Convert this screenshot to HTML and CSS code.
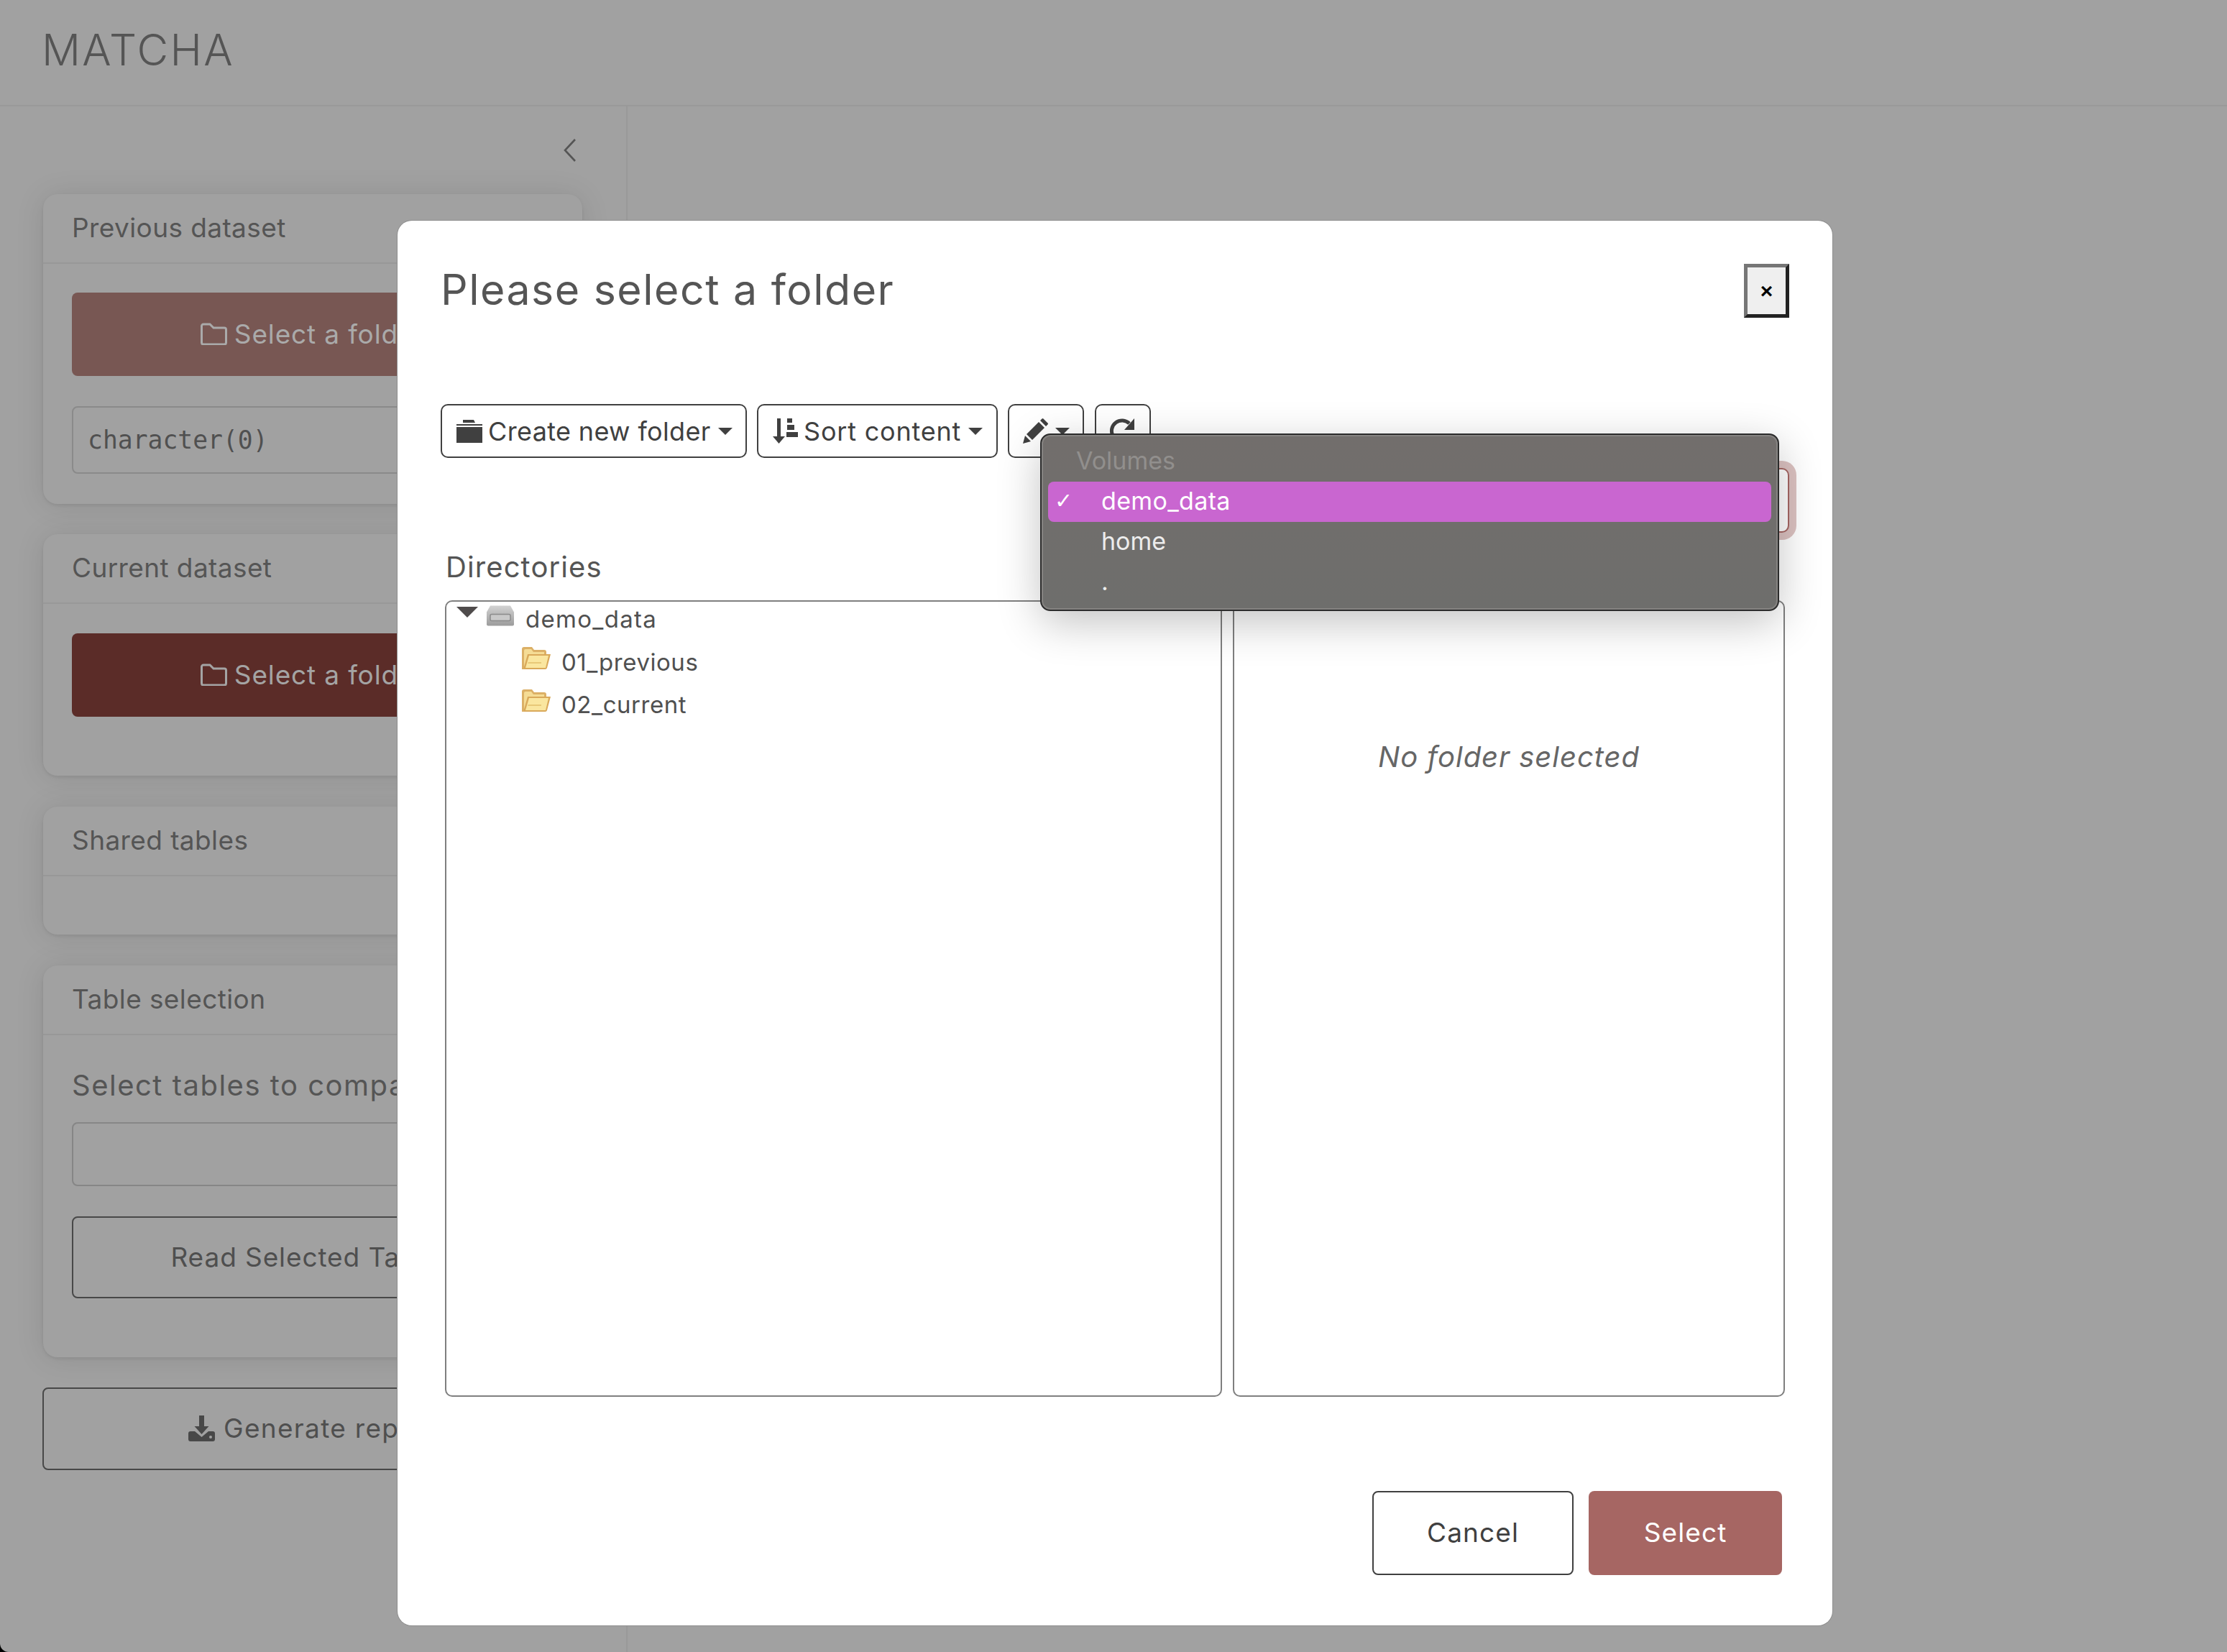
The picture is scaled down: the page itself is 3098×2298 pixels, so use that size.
FILE: index.html
```html
<!DOCTYPE html>
<html lang="en">
<head>
<meta charset="utf-8">
<title>MATCHA</title>
<link rel="stylesheet" href="styles.css">
</head>
<body>
<header class="topbar"><h1 class="brand">MATCHA</h1></header>
<div class="layout">
  <aside class="sidebar">
    <div class="collapse-row">
      <svg class="chevron" viewBox="0 0 18 32"><path d="M16 1 2 16l14 15" fill="none" stroke="#555" stroke-width="2.6"/></svg>
    </div>
    <section class="card card-tight">
      <div class="card-head">Previous dataset</div>
      <div class="card-body stack">
        <button class="btn-fill btn-prev"><svg class="ico-folder" viewBox="0 0 37 31"><path d="M4 2h9l5 5h15a2.500 2.500 0 0 1 2.500 2.500v18A2.500 2.500 0 0 1 33 30H4a2.500 2.500 0 0 1-2.500-2.500v-23A2.500 2.500 0 0 1 4 2z" fill="none" stroke="currentColor" stroke-width="3"/></svg>Select a folder</button>
        <div class="mono-box">character(0)</div>
      </div>
    </section>
    <section class="card">
      <div class="card-head">Current dataset</div>
      <div class="card-body card-body-tall">
        <button class="btn-fill btn-cur"><svg class="ico-folder" viewBox="0 0 37 31"><path d="M4 2h9l5 5h15a2.500 2.500 0 0 1 2.500 2.500v18A2.500 2.500 0 0 1 33 30H4a2.500 2.500 0 0 1-2.500-2.500v-23A2.500 2.500 0 0 1 4 2z" fill="none" stroke="currentColor" stroke-width="3"/></svg>Select a folder</button>
      </div>
    </section>
    <section class="card">
      <div class="card-head">Shared tables</div>
      <div class="card-body card-body-empty"></div>
    </section>
    <section class="card card-tight">
      <div class="card-head">Table selection</div>
      <div class="card-body card-body-tables">
        <label class="field-label">Select tables to compare:</label>
        <div class="empty-input"></div>
        <button class="btn-line btn-read">Read Selected Tables</button>
      </div>
    </section>
    <button class="btn-line btn-gen"><svg class="ico-dl" viewBox="0 0 37 36"><path d="M15 0h7v15h6.500L18.500 26 8.500 15H15z" fill="#484848"/><path d="M3 22h6l9.500 8L28 22h6a3 3 0 0 1 3 3v8a3 3 0 0 1-3 3H3a3 3 0 0 1-3-3v-8a3 3 0 0 1 3-3z" fill="#484848"/><circle cx="31" cy="30" r="2" fill="#a1a1a1"/></svg>Generate report</button>
  </aside>
  <main class="content"></main>
</div>

<div class="modal">
  <div class="modal-head">
    <h2 class="modal-title">Please select a folder</h2>
    <button class="close-btn">×</button>
  </div>
  <div class="toolbar">
    <button class="tool tool-new"><svg class="ico-new" viewBox="0 0 36 32"><path d="M9 0h15l2 4H9z" fill="#404040"/><path d="M0 6h36v2H0z" fill="#404040"/><path d="M0 10h36v22H0z" fill="#404040"/></svg>Create new folder<i class="caret"></i></button>
    <button class="tool tool-sort"><svg class="ico-sort" viewBox="0 0 35 35"><path d="M6 0h5v25h6L8.500 35 0 25h6z" fill="#404040"/><path d="M20 0h7v6h-7zM20 9h10v7H20zM19 19h16v7H19z" fill="#404040"/></svg>Sort content<i class="caret"></i></button>
    <button class="tool tool-pen"><svg class="ico-pen" viewBox="0 0 35 35"><path d="M0 35l3-11 8 8zM5 22 22 5l8 8-17 17zM24 3l2.500-2.500q1-1 2 0l6 6q1 1 0 2L32 11z" fill="#404040"/></svg><i class="caret"></i></button>
    <button class="tool tool-refresh"><svg class="ico-refresh" viewBox="0 0 36 36"><path d="M4 24A14.500 14.500 0 0 1 27 7" fill="none" stroke="#404040" stroke-width="5"/><path d="M34 0v16H20z" fill="#404040"/><path d="M32 22A14.500 14.500 0 0 1 9 29" fill="none" stroke="#404040" stroke-width="5"/></svg></button>
  </div>
  <div class="volume-row"><button class="volume-btn"></button></div>
  <div class="pane-label">Directories</div>
  <div class="panes">
    <div class="pane pane-tree">
      <div class="tree-row tree-root">
        <i class="tree-toggle"></i>
        <svg class="ico-tree" viewBox="0 0 40 30"><defs><linearGradient id="disk" x1="0" y1="0" x2="0" y2="1"><stop offset="0" stop-color="#d2d2d2"/><stop offset="1" stop-color="#9c9c9c"/></linearGradient></defs><path d="M6 1h28l5 9v17a2 2 0 0 1-2 2H3a2 2 0 0 1-2-2V10z" fill="url(#disk)"/><rect x="6" y="13" width="28" height="9" rx="2" fill="#c9c9c9" stroke="#8b8b8b" stroke-width="1.500"/></svg>
        <span class="tree-text tree-text-root">demo_data</span>
      </div>
      <div class="tree-row tree-child">
        <svg class="ico-tree" viewBox="0 0 40 31"><path d="M0 31V3q0-3 3-3h11l3 4h14q3 0 3 3v4H12L7 31z" fill="#dcb066"/><path d="M3 28V5q0-2 2-2h8l3 4h15v4" fill="#f5dc95"/><path d="M2 31l6-21h32l-5 19q-.5 2-2.500 2z" fill="#d9a95a"/><path d="M5 29l5-17h27l-4 17z" fill="#fae69f"/><path d="M9 21h18v2H8z" fill="#e8c878"/></svg>
        <span class="tree-text">01_previous</span>
      </div>
      <div class="tree-row tree-child">
        <svg class="ico-tree" viewBox="0 0 40 31"><path d="M0 31V3q0-3 3-3h11l3 4h14q3 0 3 3v4H12L7 31z" fill="#dcb066"/><path d="M3 28V5q0-2 2-2h8l3 4h15v4" fill="#f5dc95"/><path d="M2 31l6-21h32l-5 19q-.5 2-2.500 2z" fill="#d9a95a"/><path d="M5 29l5-17h27l-4 17z" fill="#fae69f"/><path d="M9 21h18v2H8z" fill="#e8c878"/></svg>
        <span class="tree-text">02_current</span>
      </div>
    </div>
    <div class="pane pane-files"><em class="no-sel">No folder selected</em></div>
  </div>
  <div class="modal-foot">
    <button class="foot-btn foot-cancel">Cancel</button>
    <button class="foot-btn foot-select">Select</button>
  </div>
  <div class="menu">
    <div class="menu-head">Volumes</div>
    <div class="menu-item menu-active"><span class="menu-check">✓</span>demo_data</div>
    <div class="menu-item"><span class="menu-check"></span>home</div>
    <div class="menu-item"><span class="menu-check"></span>.</div>
  </div>
</div>
</body>
</html>
```
FILE: styles.css
```css
* { box-sizing: border-box; }
html { background: #000; }
html, body { margin: 0; height: 2298px; }
body {
  position: relative;
  overflow: hidden;
  background: #a1a1a1;
  border-bottom-left-radius: 12px;
  font-family: Inter, "Liberation Sans", sans-serif;
  color: #555;
}
button { font-family: inherit; cursor: default; padding: 0; }

.topbar {
  height: 148px;
  border-bottom: 2px solid #999;
  padding: 0 0 8px 58px;
  display: flex;
  align-items: center;
}
.brand { margin: 0; font-size: 60px; font-weight: 300; color: #555; letter-spacing: 2.3px; }

.layout { display: flex; height: 2150px; }
.sidebar { width: 873px; padding: 0 61px 0 60px; border-right: 2px solid #999; }
.content { flex: 1; }
.collapse-row { height: 122px; display: flex; justify-content: flex-end; align-items: center; padding-right: 8px; }
.chevron { width: 18px; height: 32px; }

.card {
  border-radius: 20px;
  background: #a1a1a1;
  box-shadow: 0 2px 40px rgba(0,0,0,.1), 0 2px 4px rgba(0,0,0,.08);
  margin-bottom: 43px;
}
.card-tight { margin-bottom: 42px; }
.card-head {
  height: 97px;
  padding: 0 0 2px 40px;
  display: flex;
  align-items: center;
  border-bottom: 2px solid #989898;
  font-size: 37px;
  letter-spacing: .4px;
  color: #555;
}
.card-body { padding: 40px; }
.stack { display: flex; flex-direction: column; gap: 42px; padding-bottom: 42px; }
.card-body-tall { padding-top: 41px; padding-bottom: 82px; }
.card-body-empty { height: 81px; padding: 0; }
.card-body-tables { padding-top: 44px; padding-bottom: 82px; }

.btn-fill {
  width: 100%;
  height: 116px;
  border: 0;
  border-radius: 8px;
  padding-bottom: 2px;
  font-size: 37px;
  letter-spacing: .85px;
  display: flex;
  align-items: center;
  justify-content: center;
  gap: 10px;
}
.btn-prev { background: #785753; color: #aaa; }
.btn-cur { background: #5b2c28; color: #a4a4a4; }
.ico-folder { width: 37px; height: 31px; }
.mono-box {
  height: 94px;
  border: 2px solid #8a8a8a;
  border-radius: 8px;
  padding-left: 20px;
  display: flex;
  align-items: center;
  font: 34.7px "DejaVu Sans Mono", "Liberation Mono", monospace;
  color: #505050;
}
.field-label { display: block; font-size: 40px; line-height: 52px; letter-spacing: 1.5px; color: #555; }
.empty-input { height: 89px; margin-top: 25px; border: 2px solid #868686; border-radius: 8px; }
.btn-line {
  background: transparent;
  border: 2px solid #484848;
  border-radius: 8px;
  padding-bottom: 2px;
  color: #4f4f4f;
  font-size: 37px;
  letter-spacing: .9px;
  display: flex;
  align-items: center;
  justify-content: center;
  gap: 12px;
  width: 100%;
}
.btn-read { height: 114px; margin-top: 42px; }
.btn-gen { height: 115px; margin-left: -1px; width: calc(100% + 2px); letter-spacing: 1.3px; }
.ico-dl { width: 37px; height: 36px; }

.modal {
  position: absolute;
  left: 553px;
  top: 307px;
  width: 1996px;
  height: 1954px;
  padding: 60px;
  background: #fff;
  border-radius: 20px;
  box-shadow: 0 0 0 1px #8e8e8e;
  color: #555;
}
.modal-head { display: flex; justify-content: space-between; align-items: flex-start; }
.modal-title { margin: 0; font-size: 59px; font-weight: 400; line-height: 72px; letter-spacing: 1.5px; color: #555; }
.close-btn {
  width: 63px;
  height: 75px;
  border-width: 5px;
  border-style: solid;
  border-color: #767676 #222 #222 #767676;
  background: #efefef;
  color: #000;
  font: 700 30px "Liberation Sans", sans-serif;
}
.toolbar { display: flex; margin-top: 120px; gap: 14px; }
.tool {
  height: 75px;
  background: #fff;
  border: 2px solid #404040;
  border-radius: 10px;
  font-size: 36px;
  color: #404040;
  display: flex;
  align-items: center;
}
.tool-new { width: 426px; padding-left: 20px; letter-spacing: .35px; }
.tool-sort { width: 335px; padding-left: 20px; letter-spacing: .8px; }
.tool-pen { width: 106px; padding-left: 19px; }
.tool-refresh { width: 78px; margin-left: 1px; padding-left: 19px; }
.ico-new { width: 36px; height: 32px; margin-right: 8px; }
.ico-sort { width: 35px; height: 35px; margin-right: 8px; }
.ico-pen { width: 35px; height: 35px; }
.ico-refresh { width: 36px; height: 36px; }
.caret {
  width: 0;
  height: 0;
  margin-left: 10px;
  border-style: solid;
  border-width: 10px 10px 0;
  border-color: #404040 transparent transparent;
}
.volume-row { display: flex; justify-content: flex-end; margin-top: 14px; }
.volume-btn {
  width: 200px;
  height: 90px;
  background: #fff;
  border: 2px solid #a66663;
  border-radius: 10px;
  box-shadow: 0 0 0 10px #dcc2c1;
}
.pane-label { height: 94px; padding: 20px 0 0 7px; font-size: 40px; line-height: 56px; letter-spacing: 1.1px; color: #555; }
.panes { display: flex; gap: 15px; padding: 0 6px; }
.pane { height: 1108px; border: 2px solid #7f7f7f; border-radius: 10px; }
.pane-tree { width: 1081px; }
.pane-files { width: 768px; text-align: center; padding-top: 188px; }
.no-sel { font-size: 40px; line-height: 56px; letter-spacing: .95px; color: #666; }
.tree-row { display: flex; align-items: center; font-size: 33px; color: #505050; }
.tree-root { height: 48px; padding-left: 14px; margin-bottom: 6px; }
.tree-child { height: 59px; padding-left: 105px; }
.tree-text { margin-left: -1px; letter-spacing: .55px; }
.tree-text-root { letter-spacing: 1.3px; }
.tree-toggle {
  width: 0;
  height: 0;
  margin-right: 11px;
  margin-top: -20px;
  border-style: solid;
  border-width: 15px 15px 0;
  border-color: #4f4b4b transparent transparent;
}
.ico-tree { width: 40px; height: 31px; margin-right: 16px; margin-top: -10px; }
.modal-foot { display: flex; justify-content: flex-end; gap: 21px; margin-top: 131px; padding-right: 10px; }
.foot-btn { height: 117px; border-radius: 8px; font-size: 37px; letter-spacing: 1.1px; padding-bottom: 2px; }
.foot-cancel { width: 280px; background: #fff; border: 2px solid #404040; color: #404040; }
.foot-select { width: 269px; background: #a66663; border: 0; color: #fff; }

.menu {
  position: absolute;
  left: 894px;
  top: 296px;
  width: 1028px;
  height: 247px;
  padding: 9px;
  border: 2px solid #2c2c2c;
  border-radius: 14px;
  background: linear-gradient(#726e6c, #6e6e6c);
  box-shadow: inset 0 0 0 2px #858381, 0 16px 60px rgba(0,0,0,.24);
  font-family: Inter, "Liberation Sans", sans-serif;
  font-size: 34px;
}
.menu-head { height: 56px; line-height: 54px; padding-left: 39px; color: #918f8d; }
.menu-item { height: 56px; padding-bottom: 3px; display: flex; align-items: center; color: #ececec; border-radius: 8px; }
.menu-active { background: #c966d0; color: #fff; letter-spacing: .35px; }
.menu-check { width: 74px; padding-left: 9px; font: 30px "DejaVu Sans", sans-serif; }
```
